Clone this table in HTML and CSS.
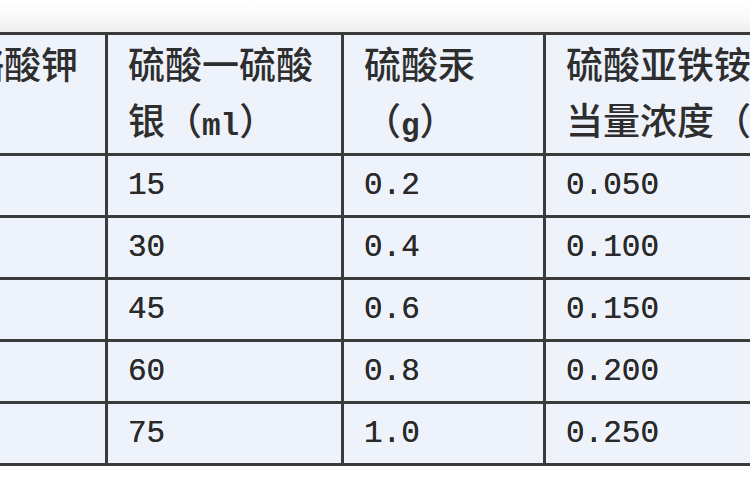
FILE: index.html
```html
<!DOCTYPE html>
<html lang="zh-CN">
<head>
<meta charset="utf-8">
<title>硫酸亚铁铵当量浓度表</title>
<link rel="stylesheet" href="styles.css">
</head>
<body>
<div class="page">
  <div class="strip"></div>
  <div class="grid">
    <div class="cell head first">重铬酸钾</div>
    <div class="cell head">硫酸一硫酸银（<span class="unit">ml</span>）</div>
    <div class="cell head">硫酸汞（<span class="unit">g</span>）</div>
    <div class="cell head">硫酸亚铁铵<br>当量浓度（N）</div>

    <div class="cell num"></div>
    <div class="cell num">15</div>
    <div class="cell num">0.2</div>
    <div class="cell num">0.050</div>

    <div class="cell num"></div>
    <div class="cell num">30</div>
    <div class="cell num">0.4</div>
    <div class="cell num">0.100</div>

    <div class="cell num"></div>
    <div class="cell num">45</div>
    <div class="cell num">0.6</div>
    <div class="cell num">0.150</div>

    <div class="cell num"></div>
    <div class="cell num">60</div>
    <div class="cell num">0.8</div>
    <div class="cell num">0.200</div>

    <div class="cell num"></div>
    <div class="cell num">75</div>
    <div class="cell num">1.0</div>
    <div class="cell num">0.250</div>
  </div>
</div>
</body>
</html>
```

FILE: styles.css
```css
html, body {
  margin: 0;
  padding: 0;
  background: #ffffff;
}

.page {
  width: 750px;
  height: 500px;
  overflow: hidden;
  background: #ffffff;
}

.strip {
  height: 32px;
  background: linear-gradient(#ffffff 0%, #fafafa 50%, #eeeeee 100%);
}

.grid {
  display: grid;
  grid-template-columns: 195px 233px 199px 260px;
  grid-template-rows: 118px repeat(5, 59px);
  gap: 3px;
  padding: 3px;
  margin-left: -93px;
  width: max-content;
  background: #3b3b3b;
}

.cell {
  background: #eef3fb;
  padding-left: 20px;
  color: #2e2e2e;
  font-family: "Noto Sans CJK SC", "Noto Sans", sans-serif;
  font-size: 37px;
  overflow: hidden;
}

.head {
  font-weight: 500;
  line-height: 56px;
}

.first {
  white-space: nowrap;
}

.unit {
  font-family: "Liberation Mono", "DejaVu Sans Mono", monospace;
  font-size: 31px;
  font-weight: 700;
}

.num {
  display: flex;
  align-items: center;
  font-family: "Liberation Mono", "DejaVu Sans Mono", monospace;
  font-size: 31px;
  color: #2a2a2a;
  text-shadow: 0 0 0.6px #2a2a2a;
}
```
